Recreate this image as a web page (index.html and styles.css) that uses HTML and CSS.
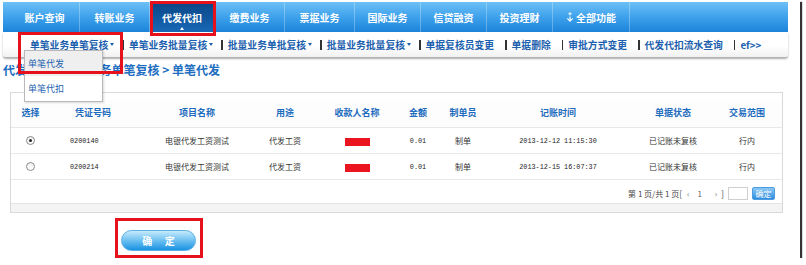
FILE: index.html
```html
<!DOCTYPE html>
<html lang="zh-CN">
<head>
<meta charset="utf-8">
<title>单笔代发</title>
<link rel="stylesheet" href="styles.css">
</head>
<body>
<div class="shot">
  <div class="page">
    <nav class="nav">
      <a class="nav-item">账户查询</a>
      <a class="nav-item">转账业务</a>
      <a class="nav-item active">代发代扣<i class="caret-up"></i></a>
      <a class="nav-item">缴费业务</a>
      <a class="nav-item">票据业务</a>
      <a class="nav-item tight">国际业务</a>
      <a class="nav-item tight">信贷融资</a>
      <a class="nav-item tight">投资理财</a>
      <a class="nav-item all"><svg class="ico-all" width="8" height="10" viewBox="0 0 8 10"><path d="M4 0.2v3.2M2.4 1.8h3.2" stroke="#fff" stroke-width="1"/><path d="M4 4.5v4.5M1.3 6.4L4 9.1 6.7 6.4" fill="none" stroke="#fff" stroke-width="1.1"/></svg>全部功能</a>
    </nav>
    <div class="subnav">
      <span class="sub-item">单笔业务单笔复核<i class="arrow"></i></span><span class="sep"></span>
      <span class="sub-item">单笔业务批量复核<i class="arrow"></i></span><span class="sep"></span>
      <span class="sub-item">批量业务单批复核<i class="arrow"></i></span><span class="sep"></span>
      <span class="sub-item">批量业务批量复核<i class="arrow"></i></span><span class="sep"></span>
      <span class="sub-item plain">单据复核员变更</span><span class="sep"></span>
      <span class="sub-item plain">单据删除</span><span class="sep"></span>
      <span class="sub-item plain">审批方式变更</span><span class="sep"></span>
      <span class="sub-item plain">代发代扣流水查询</span><span class="sep"></span>
      <span class="sub-item">ef&gt;&gt;</span>
    </div>
    <div class="crumb">代发代扣 &gt; 单笔业务单笔复核 &gt; 单笔代发</div>
    <div class="panel">
      <div class="row head">
        <span>选择</span><span>凭证号码</span><span>项目名称</span><span>用途</span><span>收款人名称</span><span>金额</span><span>制单员</span><span>记账时间</span><span>单据状态</span><span>交易范围</span>
      </div>
      <div class="row">
        <span><i class="radio on"></i></span><span class="left mono">0200140</span><span>电银代发工资测试</span><span>代发工资</span><span><i class="redact"></i></span><span class="mono">0.01</span><span>制单</span><span class="mono">2013-12-12 11:15:30</span><span>已记账未复核</span><span>行内</span>
      </div>
      <div class="row">
        <span><i class="radio"></i></span><span class="left mono">0200214</span><span>电银代发工资测试</span><span>代发工资</span><span><i class="redact"></i></span><span class="mono">0.01</span><span>制单</span><span class="mono">2013-12-15 16:07:37</span><span>已记账未复核</span><span>行内</span>
      </div>
      <div class="pager">
        <span class="pg-text">第 1 页/共 1 页[</span><span class="pg-nav first">‹</span><span class="pg-nav">1</span><span class="pg-nav wide">›</span><span class="pg-text close">]</span>
        <input class="pg-input" type="text">
        <button class="pg-btn">确定</button>
      </div>
      <div class="panel-foot"></div>
    </div>
    <div class="actions"><button class="btn-ok">确 定</button></div>
  </div>
  <div class="dropdown">
    <div class="dd-item hover">单笔代发</div>
    <div class="dd-item">单笔代扣</div>
  </div>
  <div class="mark mark-nav"></div>
  <div class="mark mark-sub"></div>
  <div class="mark mark-btn"></div>
</div>
</body>
</html>
```
FILE: styles.css
```css
body {
  margin: 0;
  background: #fff;
  font-family: "Noto Sans CJK SC", "Noto Sans", sans-serif;
}

.shot {
  position: relative;
  width: 800px;
  height: 258px;
  background: #fff;
  box-shadow: 2px 2px 1px rgba(0, 0, 0, 0.8);
}

.page {
  padding: 2px 12px 0 3px;
}

/* top navigation */
.nav {
  display: flex;
  height: 30px;
  padding-left: 7px;
  background: linear-gradient(#6cc0f6, #3a9eea 55%, #1b83d9);
}

.nav-item {
  position: relative;
  display: flex;
  align-items: center;
  justify-content: center;
  width: 70px;
  box-sizing: border-box;
  border-right: 1px solid rgba(255, 255, 255, 0.28);
  color: #fff;
  font-size: 10px;
  font-weight: bold;
}

.nav-item.active {
  width: 65px;
  background: linear-gradient(#0b4584, #125aa3 60%, #1a69b6);
}

.nav-item.tight {
  width: 66px;
}

.nav-item.all {
  width: 77px;
}

.ico-all {
  margin-right: 2px;
}

.caret-up {
  position: absolute;
  left: 50%;
  bottom: 2px;
  margin-left: -2px;
  width: 0;
  height: 0;
  border-left: 2px solid transparent;
  border-right: 2px solid transparent;
  border-bottom: 3px solid #fff;
}

/* sub navigation */
.subnav {
  display: flex;
  align-items: center;
  height: 25px;
  padding-left: 27px;
  background: linear-gradient(#fff 55%, #f1f1f1);
  border-radius: 0 0 3px 3px;
  box-shadow: 0 2px 2px rgba(0, 0, 0, 0.32);
  font-size: 9.8px;
  font-weight: bold;
  color: #1c5fae;
  white-space: nowrap;
}

.sub-item {
  display: flex;
  align-items: center;
}

.sub-item.plain {
  padding-right: 3px;
}

.arrow {
  width: 0;
  height: 0;
  margin-left: 2px;
  border-left: 2.5px solid transparent;
  border-right: 2.5px solid transparent;
  border-top: 3px solid #1c5fae;
}

.sep {
  width: 1.5px;
  height: 10px;
  margin: 0 5px 0 8px;
  background: #333;
}

/* breadcrumb */
.crumb {
  margin-top: 6px;
  line-height: 14px;
  font-size: 12px;
  font-weight: bold;
  color: #1f6fc1;
}

/* table panel */
.panel {
  width: 773px;
  box-sizing: border-box;
  margin: 15px 0 0 7px;
  padding-top: 7px;
  border: 1px solid #d9d9d9;
  background: #fff;
}

.row {
  display: grid;
  grid-template-columns: 39px 86px 122px 54px 90px 32px 58px 132px 98px 50px;
  align-items: center;
  height: 26px;
  box-sizing: border-box;
  border-bottom: 1px solid #e8e8e8;
  font-size: 8px;
  color: #333;
  text-align: center;
}

.row.head {
  height: 28px;
  padding-bottom: 2px;
  font-size: 9px;
  font-weight: bold;
  color: #1c6bbd;
  background: #fdfdfd;
}

.row .left {
  text-align: left;
  padding-left: 20px;
}

.mono {
  font-family: "Liberation Mono", monospace;
  font-size: 6.8px;
  color: #222;
}

.radio {
  display: block;
  position: relative;
  width: 9px;
  height: 9px;
  margin: 0 auto;
  box-sizing: border-box;
  border: 1px solid #8a8a8a;
  border-radius: 50%;
  background: linear-gradient(#f0f0f0, #fff);
}

.radio.on::after {
  content: "";
  position: absolute;
  left: 2px;
  top: 2px;
  width: 3px;
  height: 3px;
  border-radius: 50%;
  background: #222;
}

.redact {
  display: inline-block;
  width: 25px;
  height: 8px;
  background: #ea1521;
  vertical-align: middle;
}

.pager {
  display: flex;
  align-items: center;
  justify-content: flex-end;
  height: 23px;
  padding: 3px 7px 0 0;
  box-sizing: border-box;
  font-size: 8px;
  color: #444;
}

.pg-nav {
  margin-left: 8px;
  color: #666;
}

.pg-nav.first {
  margin-left: 5px;
}

.pg-nav.wide {
  margin-left: 13px;
}

.pg-text.close {
  margin-left: 4px;
}

.pg-input {
  width: 20px;
  height: 13px;
  box-sizing: border-box;
  margin: 0 0 0 4px;
  padding: 0;
  border: 1px solid #cfcfcf;
  background: #fff;
}

.pg-btn {
  width: 23px;
  height: 13px;
  margin-left: 4px;
  padding: 0;
  border: 1px solid #4a9be0;
  border-radius: 2px;
  background: linear-gradient(#8cc8f4, #2f8ce0);
  color: #fff;
  font-family: inherit;
  font-size: 8px;
  line-height: 11px;
}

.panel-foot {
  height: 8px;
  border-top: 1px solid #e4e4e4;
  background: #f4f4f4;
}

/* confirm button */
.actions {
  margin-top: 13px;
  padding-left: 118px;
}

.btn-ok {
  width: 75px;
  height: 21px;
  padding: 0;
  border: 1px solid #5aaee6;
  border-radius: 11px;
  background: linear-gradient(#c6eafc, #6cc0f1 50%, #1a92e2);
  color: #fff;
  font-family: inherit;
  font-size: 10px;
  font-weight: bold;
  letter-spacing: 5px;
  text-indent: 5px;
}

/* dropdown menu */
.dropdown {
  position: absolute;
  left: 24px;
  top: 50px;
  width: 79px;
  box-sizing: border-box;
  border: 1px solid #b9b9b9;
  background: #fff;
  box-shadow: 1px 1px 2px rgba(0, 0, 0, 0.15);
  font-size: 9px;
  color: #1c5fae;
}

.dd-item {
  height: 25px;
  line-height: 25px;
  padding-left: 3px;
}

.dd-item.hover {
  background: #efefef;
}

/* red annotation boxes */
.mark {
  position: absolute;
  box-sizing: border-box;
  border: 3px solid #e5121b;
}

.mark-nav {
  left: 150px;
  top: 1px;
  width: 66px;
  height: 35px;
}

.mark-sub {
  left: 18px;
  top: 32px;
  width: 105px;
  height: 42px;
}

.mark-btn {
  left: 115px;
  top: 218px;
  width: 88px;
  height: 40px;
}
```
